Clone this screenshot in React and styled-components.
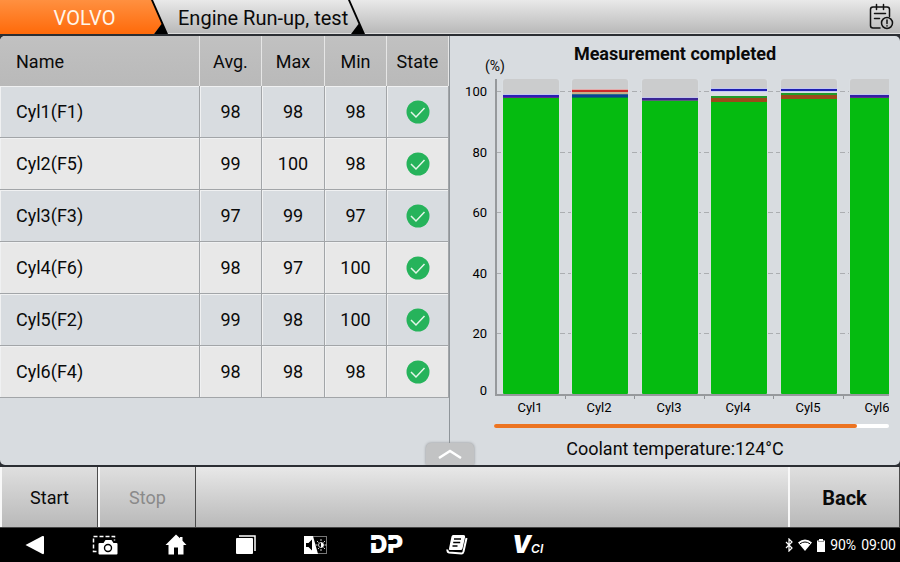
import React from 'react';
import styled, { createGlobalStyle } from 'styled-components';

const GlobalStyle = createGlobalStyle`
  * {
    box-sizing: border-box;
  }

  body {
    margin: 0;
    background: #000;
    color: #0a0a0a;
    font-family: Roboto, "Liberation Sans", sans-serif;
    font-size: 18px;
    line-height: 24px;
  }

  button {
    border: 0;
    padding: 0;
    margin: 0;
    background: none;
    color: inherit;
    font: inherit;
  }

  svg {
    display: block;
  }
`;

const Screen = styled.div`
  display: flex;
  flex-direction: column;
  min-height: 100vh;
  background: #2b2e33;
`;

const TopBar = styled.header`
  display: flex;
  height: 34px;
  background: linear-gradient(#e9e9e9, #b9b9b9);
  border-bottom: 1px solid #dcdcdc;
`;

const Tab = styled.button`
  position: relative;
  display: flex;
  align-items: center;
  height: 34px;
  padding-left: ${props => props.$first ? '18px' : '10px'};
  min-width: ${props => props.$first ? '168px' : '0'};
  color: ${props => props.$first ? '#fff6ea' : '#0a0a0a'};
  font-size: 20px;

  &::before {
    content: '';
    position: absolute;
    inset: 0;
    background: ${props => props.$first ? 'linear-gradient(#ff9040, #ff6a0a)' : 'none'};
    clip-path: polygon(0 0, calc(100% - 16px) 0, calc(100% - 6px) 24px, calc(100% - 14px) 100%, 0 100%);
  }

  svg {
    position: relative;
  }
`;

const TabLabel = styled.span`
  position: relative;
  flex: 1;
  padding-top: 2px;
  text-align: center;
`;

const LogButton = styled.button`
  margin-left: auto;
  padding-right: 6px;
`;

const Main = styled.main`
  display: flex;
  flex: 1;
  position: relative;
  margin: 2px 0;
  border-radius: 5px;
  overflow: hidden;
  background: #d8dce0;
`;

const TablePanel = styled.section`
  flex: 0 0 50%;
  border-right: 1px solid #8f959a;
`;

const ChartPanel = styled.section`
  flex: 0 0 50%;
  padding: 0 11px;
`;

const ResultTable = styled.table`
  width: 100%;
  table-layout: fixed;
  border-collapse: separate;
  border-spacing: 0;
`;

const HeadCell = styled.th`
  width: ${props => props.$width ? props.$width + 'px' : 'auto'};
  height: 50px;
  padding: 2px 0 0 ${props => props.$name ? '16px' : '0'};
  text-align: ${props => props.$name ? 'left' : 'center'};
  font-weight: 400;
  background: linear-gradient(#c1c1c1, #b9b9b9);
  border-right: 1px solid #e6e6e6;
`;

const Row = styled.tr`
  background: ${props => props.$even ? '#e8e8e8' : '#d8dce0'};
`;

const Cell = styled.td`
  height: 52px;
  padding: 0 0 0 ${props => props.$name ? '16px' : '0'};
  text-align: ${props => props.$name ? 'left' : 'center'};
  border-right: 1px solid #a2a5a8;
  border-bottom: 1px solid #a2a5a8;
  box-shadow: inset 1px 1px 0 #f0f1f2;

  svg {
    margin: 0 auto;
  }
`;

const ChartHead = styled.div`
  display: grid;
  height: 38px;
`;

const ChartTitle = styled.h1`
  grid-area: 1 / 1;
  justify-self: center;
  margin: 0;
  font-size: 18px;
  font-weight: 700;
  line-height: 36px;
`;

const Unit = styled.span`
  grid-area: 1 / 1;
  align-self: end;
  padding-left: 24px;
  font-size: 14px;
  line-height: 16px;
`;

const Chart = styled.svg`
  width: 100%;
  height: 346px;
  font-size: 13px;
`;

const ScrollTrack = styled.div`
  height: 4px;
  margin: 4px 0 0 33px;
  border-radius: 2px;
  background: #fff;
`;

const ScrollThumb = styled.div`
  height: 4px;
  width: 92%;
  border-radius: 2px;
  background: #ec7422;
`;

const Coolant = styled.p`
  margin: 9px 0 0;
  text-align: center;
`;

const PullUp = styled.button`
  position: absolute;
  left: 50%;
  bottom: 0;
  display: grid;
  place-items: center;
  width: 48px;
  height: 22px;
  transform: translateX(-50%);
  border-radius: 5px 5px 0 0;
  background: #c2c3c4;
  box-shadow: 0 0 3px #8c8f92;
`;

const ActionBar = styled.footer`
  display: flex;
  height: 60px;
  background: linear-gradient(#e8e8e8, #b9b9b9);
`;

const Action = styled.button`
  width: ${props => props.$wide ? '112px' : '98px'};
  margin-left: ${props => props.$wide ? 'auto' : '0'};
  padding-top: 2px;
  font-weight: ${props => props.$wide ? 700 : 400};
  font-size: ${props => props.$wide ? '20px' : '18px'};
  border-left: 2px solid #f8f8f8;
  border-right: 1px solid #4c4c4c;
  background: linear-gradient(#dfdfdf, #b9b9b9);

  &:disabled {
    color: #8a8a8a;
  }
`;

const SystemBar = styled.nav`
  display: flex;
  justify-content: space-between;
  height: 35px;
  border-top: 1px solid #444;
  background: #000;
  color: #fff;
`;

const SystemButtons = styled.div`
  display: flex;
  flex: 0 0 62.5%;
`;

const SystemButton = styled.button`
  display: grid;
  flex: 1;
  place-items: center;
`;

const Status = styled.div`
  display: flex;
  align-items: center;
  gap: 5px;
  padding-right: 4px;
  font-size: 14px;
`;

const columns = [
    { title: 'Avg.', width: 62 },
    { title: 'Max', width: 63 },
    { title: 'Min', width: 62 },
    { title: 'State', width: 62 }
];

const rows = [
    { name: 'Cyl1(F1)', values: [98, 98, 98] },
    { name: 'Cyl2(F5)', values: [99, 100, 98] },
    { name: 'Cyl3(F3)', values: [97, 99, 97] },
    { name: 'Cyl4(F6)', values: [98, 97, 100] },
    { name: 'Cyl5(F2)', values: [99, 98, 100] },
    { name: 'Cyl6(F4)', values: [98, 98, 98] }
];

// marks are [y, height, colour] inside the plot
const bars = [
    { label: 'Cyl1', top: 23, back: 20, marks: [[20, 1, '#c3c5ee'], [21, 2, '#2a20b4'], [23, 1, '#5c2e8e']] },
    { label: 'Cyl2', top: 22, back: 15, marks: [[15, 1, '#e4a9a9'], [16, 2, '#cc2a2a'], [18, 2, '#c5b08a'], [20, 1, '#2d6b8c'], [21, 2, '#0c3f94'], [23, 1, '#08705a']] },
    { label: 'Cyl3', top: 26, back: 23, marks: [[23, 1, '#c3c5ee'], [24, 2, '#3a2694'], [26, 1, '#5c5c7e']] },
    { label: 'Cyl4', top: 22, back: 14, marks: [[14, 1, '#c3c8f2'], [15, 2, '#2020b0'], [17, 1, '#c3c8f2'], [22, 2, '#1f9c2a'], [24, 4, '#9c4a1a']] },
    { label: 'Cyl5', top: 19, back: 14, marks: [[14, 1, '#c3c8f2'], [15, 2, '#2020b0'], [17, 1, '#c3c8f2'], [19, 2, '#1f9c2a'], [21, 4, '#9c4a1a']] },
    { label: 'Cyl6', top: 23, back: 20, marks: [[20, 1, '#c3c5ee'], [21, 2, '#3220a4'], [23, 1, '#5c2e8e']] }
];

const scale = [100, 80, 60, 40, 20, 0];
const PITCH = 69.4;
const BASE = 320;

const scaleY = value => BASE - value * 3.03;

const BarChart = () => (
    <Chart role="img" aria-label="Cylinder power balance">
        {scale.map(value => (
            <g key={value}>
                <text x="26" y={value === 0 ? BASE + 1 : scaleY(value) + 5} textAnchor="end">{value}</text>
                {value > 0 &&
                    <line x1="35" x2="100%" y1={Math.round(scaleY(value)) + 0.5} y2={Math.round(scaleY(value)) + 0.5}
                        stroke="#abaeb1" strokeDasharray="5 3" />}
            </g>
        ))}
        {bars.map((bar, i) => {
            let x = Math.round(42 + i * PITCH);
            return (
                <g key={bar.label}>
                    <rect x={x - 1} y="5" width="58" height={BASE - 5} fill="#dadee2" />
                    <path d={`M${x} ${bar.back}V8q0 -3 3 -3h50q3 0 3 3V${bar.back}z`} fill="#cbcccd" />
                    <rect x={x} y={bar.top} width="56" height={BASE - bar.top} rx="1" fill="#05bb10" />
                    {bar.marks.map(([y, height, fill]) => (
                        <rect key={y} x={x} y={y} width="56" height={height} fill={fill} />
                    ))}
                    <rect x={x + 62} y={BASE} width="1" height="5" fill="#8f9296" />
                    <text x={x + 27} y="338" textAnchor="middle">{bar.label}</text>
                </g>
            );
        })}
        <rect x="34" y="5" width="2" height={BASE - 4} fill="#96999c" />
        <rect x="34" y={BASE} width="100%" height="2" fill="#96999c" />
    </Chart>
);

const Slash = () => (
    <svg width="17" height="34" viewBox="0 0 17 34">
        <path d="M0 0h2L17 34H3l7.500-10z" fill="#000" />
    </svg>
);

const OkIcon = () => (
    <svg width="24" height="24" viewBox="0 0 24 24" role="img" aria-label="OK">
        <circle cx="12" cy="12" r="11.500" fill="#26b35b" />
        <path d="M5 12l5 5 8.500-9" fill="none" stroke="#e4f6e9" strokeWidth="1.500" />
    </svg>
);

const LogIcon = () => (
    <svg width="26" height="28" viewBox="0 0 26 28" fill="none" stroke="#111" strokeWidth="1.500" strokeLinecap="round">
        <path d="M12 25H5Q2.500 25 2.500 22.500V6.500Q2.500 4 5 4h14q2.500 0 2.500 2.500v7M8.500 1.500v5M15.500 1.500v5M6.500 10.500h11M6.500 15.500h5" />
        <circle cx="19" cy="20" r="5.500" />
        <path d="M19 17v3.500M19 22.700v.2" />
    </svg>
);

const BackIcon = () => (
    <svg width="20" height="20" viewBox="0 0 20 20" fill="#fff">
        <path d="M0.500 10L17.500 1q1.500-.5 1.500 1v16q0 1.500-1.500 1z" />
    </svg>
);

const ShotIcon = () => (
    <svg width="26" height="20" viewBox="0 0 26 20">
        <path d="M4.500 16.500H1.500V1.500h21v4" fill="none" stroke="#fff" strokeWidth="1.500" strokeDasharray="4 2" />
        <path d="M7.500 8h4l2-3h6l2 3h3q1 0 1 1v9.500q0 1-1 1h-17q-1 0-1-1V9q0-1 1-1z" fill="#fff" />
        <circle cx="16" cy="13" r="3.500" fill="none" stroke="#000" strokeWidth="1.400" />
    </svg>
);

const HomeIcon = () => (
    <svg width="22" height="22" viewBox="0 0 22 22" fill="#fff">
        <path d="M11 0.500l4 3.800V3h2.500v3.700L21.500 11h-3v9.500H13v-7H9v7H3.500V11H.5z" />
    </svg>
);

const RecentIcon = () => (
    <svg width="20" height="20" viewBox="0 0 20 20">
        <path d="M3 1h16V16" fill="none" stroke="#fff" strokeWidth="1.500" />
        <rect x="0" y="3" width="17" height="16" rx="1" fill="#fff" />
    </svg>
);

const DisplayIcon = () => (
    <svg width="24" height="20" viewBox="0 0 24 20">
        <rect x="0.500" y="1.500" width="22" height="17" fill="#000" stroke="#777" />
        <path d="M0 1h9l5 18H0z" fill="#fff" />
        <path d="M2 8h2.500L8 4.500v11L4.500 12H2z" fill="#000" />
        <g stroke="#ccc" fill="none">
            <circle cx="17" cy="10" r="2.500" />
            <path d="M17 4v2M17 14v2M11.500 10h2M20.500 10h2M13 6l1.500 1.500M21 6l-1.500 1.500M14 14l1-1M21 14l-1.500-1.500" />
        </g>
        <path d="M17 7.500a2.500 2.500 0 010 5z" fill="#fff" />
    </svg>
);

const DpLogo = () => (
    <svg width="38" height="32" viewBox="0 0 38 32">
        <text x="2" y="24" fill="#fff" fontFamily="Inter, sans-serif" fontWeight="900" fontSize="24">DP</text>
        <path d="M2 11h10v3H2zM20 11h6v4h-6z" fill="#000" />
    </svg>
);

const NotesIcon = () => (
    <svg width="22" height="22" viewBox="0 0 22 22">
        <path d="M7 1h10.500q2 0 1.600 2l-2.600 11.500q-.4 1.500-2 1.500H4q-1.500 0-1-1.500L5.500 2.500Q6 1 7 1z" fill="#fff" />
        <path d="M8 5h7M7.200 8.500h7M6.500 12h5" stroke="#000" strokeWidth="1.300" />
        <path d="M20.500 4L17.500 17.500q-.5 2-2 2L3 18.500Q1 18 1.500 15.500" fill="none" stroke="#fff" strokeWidth="2" />
    </svg>
);

const VciLogo = () => (
    <svg width="36" height="32" viewBox="0 0 36 32">
        <text x="3" y="24" fill="#fff" fontFamily="Inter, sans-serif" fontStyle="italic" fontWeight="900" fontSize="24">
            V<tspan fontWeight="600" fontSize="12">CI</tspan>
        </text>
    </svg>
);

const BluetoothIcon = () => (
    <svg width="8" height="14" viewBox="0 0 8 14" fill="none" stroke="#fff" strokeWidth="1.200">
        <path d="M1 4l6 6-3 3V1l3 3-6 6" />
    </svg>
);

const WifiIcon = () => (
    <svg width="14" height="12" viewBox="0 0 14 12">
        <path d="M0 3.500Q7-2.500 14 3.500L7 12z" fill="#fff" />
        <path d="M2 4.800q5-3.600 10 0" fill="none" stroke="#000" strokeWidth="1" />
    </svg>
);

const BatteryIcon = () => (
    <svg width="8" height="13" viewBox="0 0 8 13">
        <path d="M2 0h4v1.500h2V13H0V1.500h2z" fill="#fff" />
        <path d="M1 2.500h6" stroke="#999" />
    </svg>
);

const systemItems = [
    { name: 'Back key', icon: <BackIcon /> },
    { name: 'Screenshot', icon: <ShotIcon /> },
    { name: 'Home', icon: <HomeIcon /> },
    { name: 'Recent apps', icon: <RecentIcon /> },
    { name: 'Display and sound', icon: <DisplayIcon /> },
    { name: 'DP', icon: <DpLogo /> },
    { name: 'Notes', icon: <NotesIcon /> },
    { name: 'VCI', icon: <VciLogo /> }
];

const App = () => (
    <Screen>
        <GlobalStyle />
        <TopBar>
            <Tab $first type="button">
                <TabLabel>VOLVO</TabLabel>
                <Slash />
            </Tab>
            <Tab type="button">
                <TabLabel>Engine Run-up, test</TabLabel>
                <Slash />
            </Tab>
            <LogButton type="button" aria-label="Log"><LogIcon /></LogButton>
        </TopBar>

        <Main>
            <TablePanel>
                <ResultTable>
                    <thead>
                        <tr>
                            <HeadCell $name scope="col">Name</HeadCell>
                            {columns.map(column => (
                                <HeadCell key={column.title} $width={column.width} scope="col">{column.title}</HeadCell>
                            ))}
                        </tr>
                    </thead>
                    <tbody>
                        {rows.map((row, i) => (
                            <Row key={row.name} $even={i % 2 === 1}>
                                <Cell $name>{row.name}</Cell>
                                {row.values.map((value, j) => <Cell key={j}>{value}</Cell>)}
                                <Cell><OkIcon /></Cell>
                            </Row>
                        ))}
                    </tbody>
                </ResultTable>
            </TablePanel>

            <ChartPanel>
                <ChartHead>
                    <ChartTitle>Measurement completed</ChartTitle>
                    <Unit>(%)</Unit>
                </ChartHead>
                <BarChart />
                <ScrollTrack><ScrollThumb /></ScrollTrack>
                <Coolant>Coolant temperature:124°C</Coolant>
            </ChartPanel>

            <PullUp type="button" aria-label="Expand">
                <svg width="24" height="10" viewBox="0 0 24 10" fill="none" stroke="#fff" strokeWidth="2.500">
                    <path d="M1 9l11-7 11 7" />
                </svg>
            </PullUp>
        </Main>

        <ActionBar>
            <Action type="button">Start</Action>
            <Action type="button" disabled>Stop</Action>
            <Action $wide type="button">Back</Action>
        </ActionBar>

        <SystemBar>
            <SystemButtons>
                {systemItems.map(item => (
                    <SystemButton key={item.name} type="button" aria-label={item.name}>{item.icon}</SystemButton>
                ))}
            </SystemButtons>
            <Status>
                <BluetoothIcon />
                <WifiIcon />
                <BatteryIcon />
                <span>90%</span>
                <span>09:00</span>
            </Status>
        </SystemBar>
    </Screen>
);

export default App;
